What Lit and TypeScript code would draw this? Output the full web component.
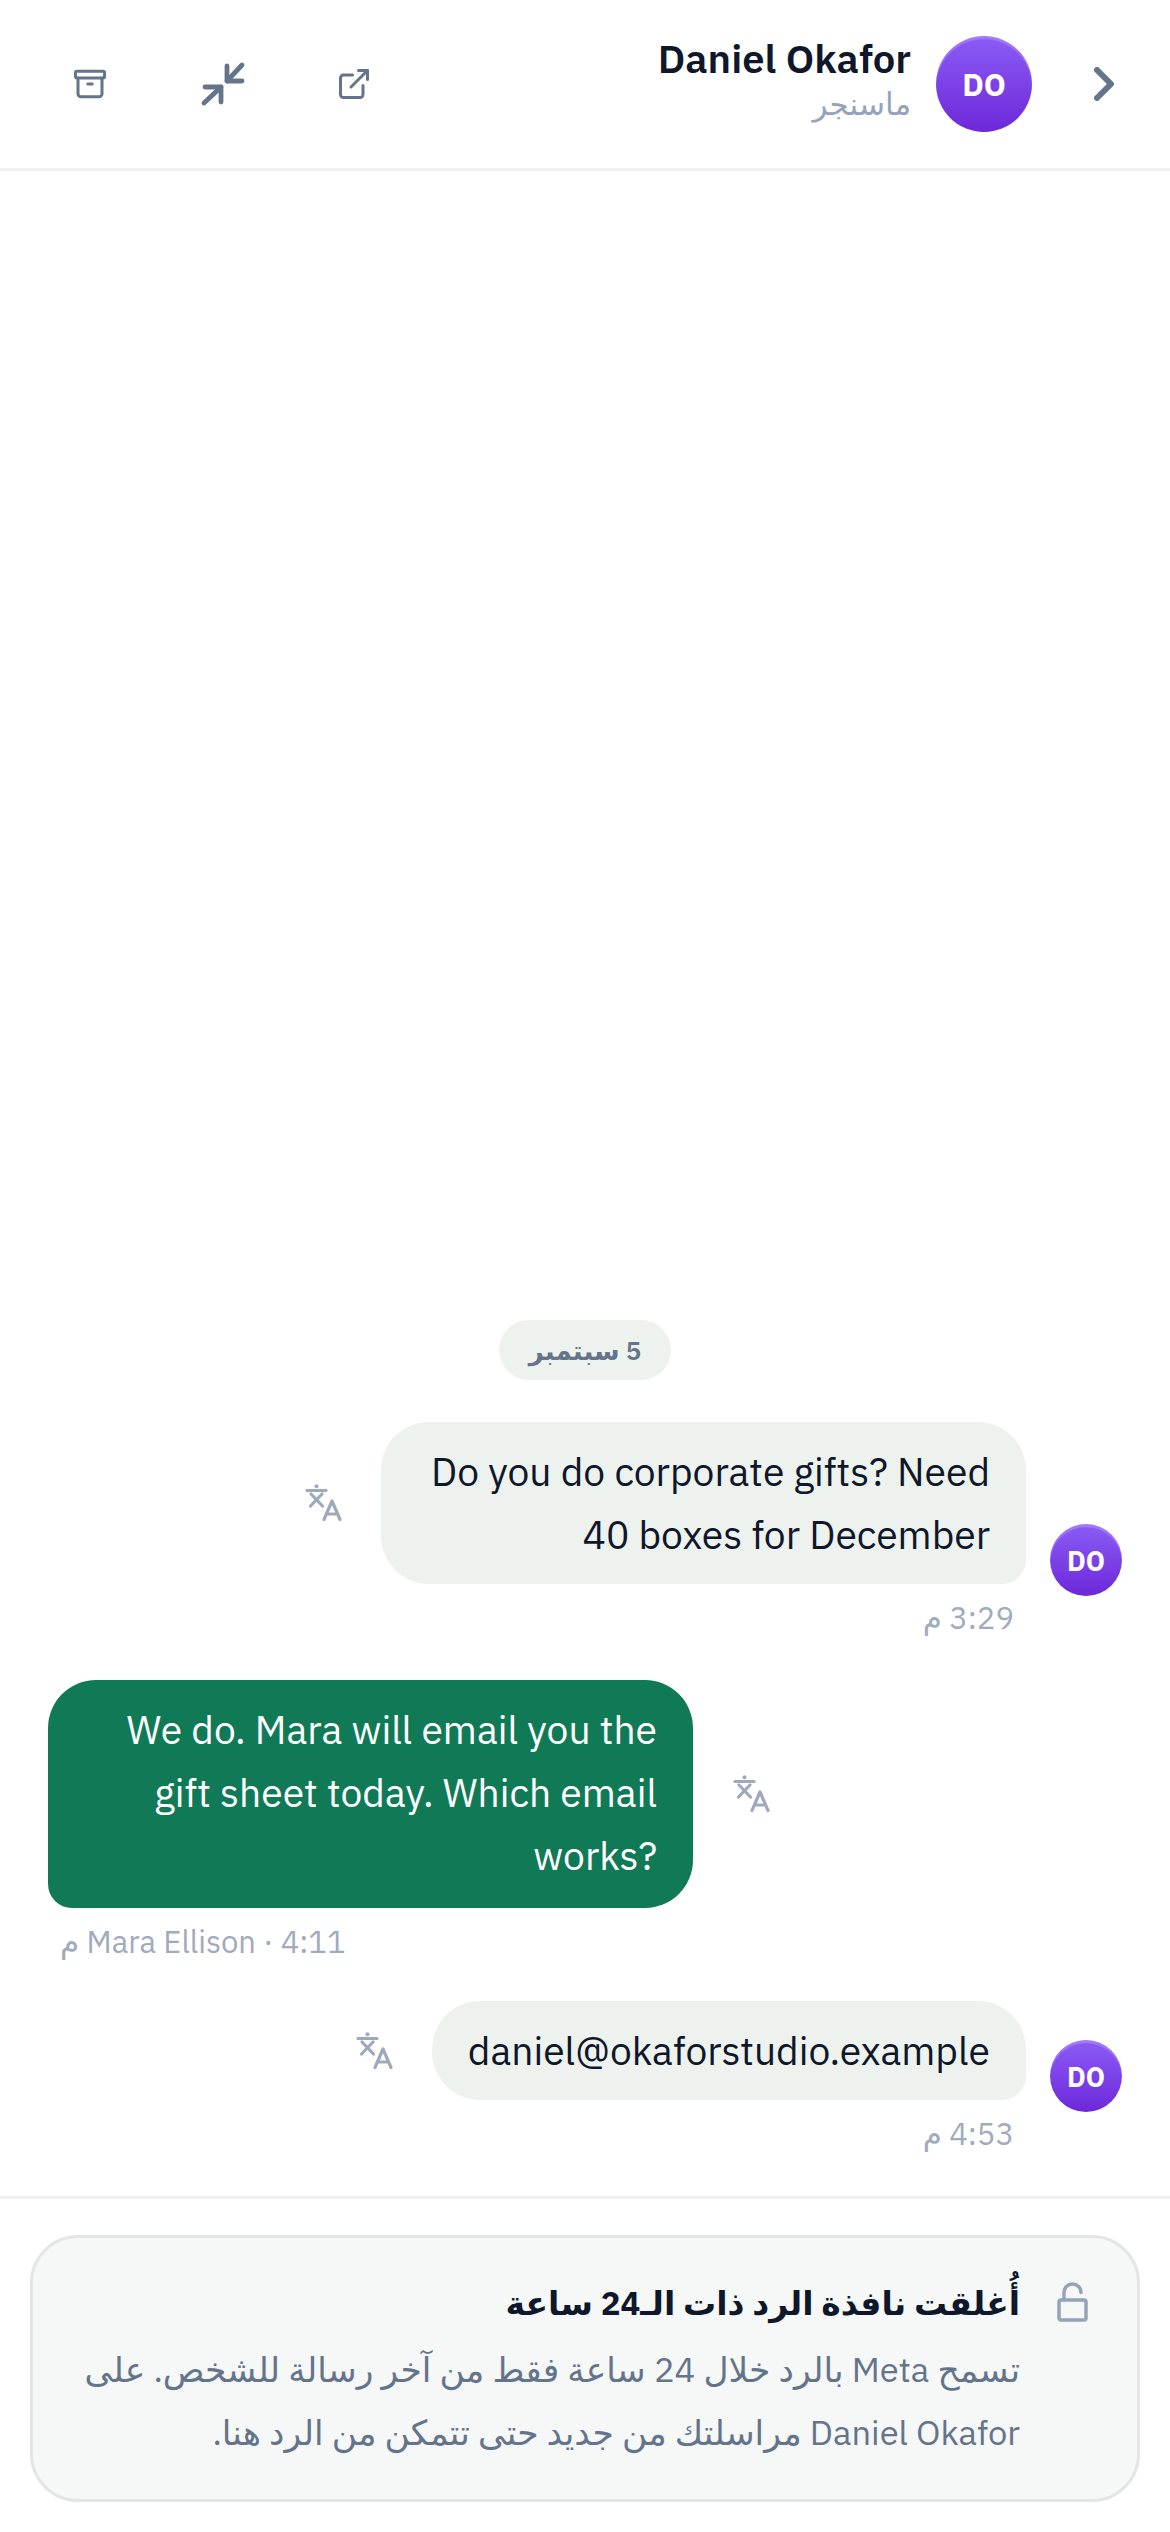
import { LitElement, html, css } from "lit";
import { customElement } from "lit/decorators.js";

const translateIcon = html`<svg class="tr" viewBox="0 0 38 38" fill="none" stroke="currentColor" stroke-width="3.2" stroke-linecap="round" stroke-linejoin="round">
  <path d="M2 6.5H21"/><circle cx="11.5" cy="2.2" r="2" fill="currentColor" stroke="none"/>
  <path d="M6 10L17.5 22M17 10L5.5 22"/>
  <path d="M19 35.5L27 17L35 35.5M21.6 30H32.4"/>
</svg>`;

@customElement("app-root")
export class AppRoot extends LitElement {
  static styles = css`
    :host { display: block; }
    .page {
      direction: rtl; width: 1170px; height: 2532px; background: #fff; display: flex; flex-direction: column;
      font-family: "IBM Plex Sans", "Noto Sans", "DejaVu Sans", sans-serif; color: #0f172a; overflow: hidden;
    }
    header { height: 168px; flex: none; border-bottom: 3px solid #f0f1ee; display: flex; align-items: center; padding: 0 56px 0 48px; }
    .chev { width: 20px; height: 34px; color: #64748b; flex: none; }
    .avatar {
      border-radius: 50%; color: #fff; font-weight: 700; display: flex; align-items: center; justify-content: center; flex: none;
      background: linear-gradient(180deg, #8b5cf6, #6d28d9); box-shadow: inset 0 3px 1px rgba(255,255,255,.2);
    }
    .av-lg { width: 96px; height: 96px; font-size: 31px; margin: 0 62px 0 25px; }
    .av-sm { width: 72px; height: 72px; font-size: 27px; margin-bottom: 42px; }
    .who { display: flex; flex-direction: column; align-items: flex-start; flex: 1; padding-bottom: 8px; }
    .name { direction: ltr; font-size: 40px; font-weight: 600; line-height: 48px; color: #0f172a; }
    .sub { font-size: 31px; line-height: 44px; color: #94a3b8; }
    .tools { display: flex; align-items: center; gap: 48px; color: #64748b; }
    .tool { width: 84px; height: 84px; display: flex; align-items: center; justify-content: center; }
    .tool svg { display: block; width: 36px; height: 36px; }
    .tool svg.big { width: 52px; height: 52px; }
    main { flex: 1; min-height: 0; display: flex; flex-direction: column; justify-content: flex-end; padding-bottom: 42px; }
    .date { align-self: center; height: 60px; padding: 0 30px; border-radius: 30px; background: #eef2ee; color: #64748b; font-size: 26px; font-weight: 600; display: flex; align-items: center; margin-bottom: 42px; }
    .row { display: flex; align-items: flex-end; margin-bottom: 42px; }
    .row:last-child { margin-bottom: 0; }
    .in { padding-right: 48px; gap: 24px; }
    .out { padding-left: 48px; justify-content: flex-end; margin-bottom: 39px; }
    .col { display: flex; flex-direction: column; min-width: 0; }
    .line { display: flex; align-items: center; gap: 38px; }
    .out .line { gap: 40px; }
    .bubble { max-width: 645px; box-sizing: border-box; padding: 18px 36px; font-size: 39px; line-height: 63px; text-align: right; border-radius: 48px; flex: none; }
    .in .bubble { background: #eef2ee; color: #0f172a; border-bottom-right-radius: 24px; }
    .out .bubble { background: #107a57; color: #fff; border-bottom-left-radius: 24px; padding-bottom: 21px; }
    .tr { width: 38px; height: 38px; color: #9fa9bb; flex: none; }
    .meta { font-size: 31px; line-height: 40px; color: #a0abbd; margin-top: 14px; padding: 0 12px; }
    .in .meta { align-self: flex-start; }
    .out .meta { align-self: flex-end; }
    footer { flex: none; border-top: 3px solid #f0f1ee; padding: 36px 30px 30px; }
    .card { box-sizing: border-box; height: 267px; border: 3px solid #e3e6e2; border-radius: 48px; background: #f6f8f7; padding: 38px 47px 0 48px; display: flex; gap: 34px; }
    .lock { width: 36px; height: 40px; color: #94a3b8; flex: none; margin-top: 6px; }
    .title { font-size: 33px; font-weight: 700; line-height: 54px; color: #0f172a; }
    .body { font-size: 34.5px; line-height: 63px; color: #64748b; margin-top: 8px; }
  `;

  render() {
    return html`<div class="page">
      <header>
        <svg class="chev" viewBox="0 0 20 34" fill="none" stroke="currentColor" stroke-width="6" stroke-linecap="round" stroke-linejoin="round"><path d="M3 3L17 17L3 31"/></svg>
        <div class="avatar av-lg">DO</div>
        <div class="who"><div class="name">Daniel Okafor</div><div class="sub">ماسنجر</div></div>
        <div class="tools">
          <div class="tool"><svg viewBox="0 0 24 24" fill="none" stroke="currentColor" stroke-width="2" stroke-linecap="round" stroke-linejoin="round"><path d="M15 3h6v6"/><path d="M10 14 21 3"/><path d="M18 13v6a2 2 0 0 1-2 2H5a2 2 0 0 1-2-2V8a2 2 0 0 1 2-2h6"/></svg></div>
          <div class="tool"><svg class="big" viewBox="0 0 52 52" fill="none" stroke="currentColor" stroke-width="4.8" stroke-linecap="round" stroke-linejoin="round"><path d="M31 23L46 7"/><path d="M31 8V23H46"/><path d="M25 29L8 45"/><path d="M9 29H25V44"/></svg></div>
          <div class="tool"><svg viewBox="0 0 24 24" fill="none" stroke="currentColor" stroke-width="2" stroke-linecap="round" stroke-linejoin="round"><rect x="2.3" y="3.5" width="19.4" height="4.5" rx="1"/><path d="M4 8v10.5a2 2 0 0 0 2 2h12a2 2 0 0 0 2-2V8"/><path d="M10.5 12h3"/></svg></div>
        </div>
      </header>
      <main>
        <div class="date">5 سبتمبر</div>
        <div class="row in">
          <div class="avatar av-sm">DO</div>
          <div class="col">
            <div class="line"><div class="bubble">Do you do corporate gifts? Need 40 boxes for December</div>${translateIcon}</div>
            <div class="meta">3:29 م</div>
          </div>
        </div>
        <div class="row out">
          <div class="col">
            <div class="line">${translateIcon}<div class="bubble" dir="ltr">We do. Mara will email you the gift sheet today. Which email works?</div></div>
            <div class="meta">Mara Ellison · 4:11 م</div>
          </div>
        </div>
        <div class="row in">
          <div class="avatar av-sm">DO</div>
          <div class="col">
            <div class="line"><div class="bubble">daniel@okaforstudio.example</div>${translateIcon}</div>
            <div class="meta">4:53 م</div>
          </div>
        </div>
      </main>
      <footer>
        <div class="card">
          <svg class="lock" viewBox="0 0 36 40" fill="none" stroke="currentColor" stroke-width="3.5" stroke-linecap="round"><rect x="5" y="18" width="27" height="20" rx="2"/><path d="M10 18V10.5a8.5 8.5 0 0 1 17 0"/></svg>
          <div>
            <div class="title">أُغلقت نافذة الرد ذات الـ24 ساعة</div>
            <div class="body">تسمح Meta بالرد خلال 24 ساعة فقط من آخر رسالة للشخص. على Daniel Okafor مراسلتك من جديد حتى تتمكن من الرد هنا.</div>
          </div>
        </div>
      </footer>
    </div>`;
  }
}
